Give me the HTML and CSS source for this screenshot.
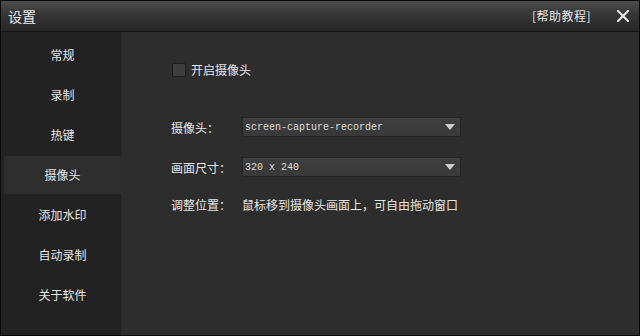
FILE: index.html
```html
<!DOCTYPE html>
<html lang="zh">
<head>
<meta charset="utf-8">
<link rel="stylesheet" href="styles.css">
</head>
<body>
<div class="window">
  <div class="titlebar">
    <span class="title">设置</span>
    <span class="help">[帮助教程]</span>
    <span class="close">
      <svg width="12" height="12" viewBox="0 0 12 12"><path d="M1 1 L11 11 M11 1 L1 11" stroke="#e6e6e6" stroke-width="2.2" stroke-linecap="square"/></svg>
    </span>
  </div>
  <div class="body">
    <div class="sidebar">
      <div class="item">常规</div>
      <div class="item">录制</div>
      <div class="item">热键</div>
      <div class="item active">摄像头</div>
      <div class="item">添加水印</div>
      <div class="item">自动录制</div>
      <div class="item">关于软件</div>
    </div>
    <div class="main">
      <div class="check-row">
        <span class="checkbox"></span>
        <span class="check-label">开启摄像头</span>
      </div>
      <div class="row first">
        <span class="label">摄像头：</span>
        <div class="select"><span class="select-text">screen-capture-recorder</span><span class="arrow"></span></div>
      </div>
      <div class="row">
        <span class="label">画面尺寸：</span>
        <div class="select"><span class="select-text">320 x 240</span><span class="arrow"></span></div>
      </div>
      <div class="row text-row">
        <span class="label">调整位置：</span>
        <span class="value">鼠标移到摄像头画面上，可自由拖动窗口</span>
      </div>
    </div>
  </div>
</div>
</body>
</html>
```
FILE: styles.css
```css
* { box-sizing: border-box; }
html, body { margin: 0; padding: 0; background: #000; }
body {
  width: 640px;
  height: 336px;
  font-family: "Noto Sans CJK SC", "Noto Sans", sans-serif;
  color: #e6e6e6;
}
.window {
  width: 640px;
  height: 336px;
  border: 1px solid #0a0a0a;
  display: flex;
  flex-direction: column;
  background: #2d2d2d;
}
.titlebar {
  height: 31px;
  flex: none;
  display: flex;
  align-items: center;
  padding: 0 10px 0 7px;
  background: linear-gradient(to bottom, #4c4c4c 0%, #363636 45%, #262626 100%);
  border-bottom: 1px solid #161616;
}
.title {
  font-size: 14px;
  color: #ececec;
  flex: 1;
  line-height: 16px;
}
.help {
  font-size: 12px;
  color: #e6e6e6;
  letter-spacing: 0.5px;
  margin-right: 26px;
  line-height: 16px;
}
.close {
  width: 12px;
  height: 12px;
  display: flex;
}
.body {
  flex: 1;
  display: flex;
  min-height: 0;
}
.sidebar {
  width: 120px;
  flex: none;
  background: #222222;
  padding: 4px 0 0 3px;
  display: flex;
  flex-direction: column;
  gap: 2px;
}
.item {
  height: 38px;
  display: flex;
  align-items: center;
  justify-content: center;
  font-size: 12px;
  line-height: 14px;
  color: #e6e6e6;
  padding-bottom: 1px;
}
.item.active {
  background: #2e2e2e;
}
.main {
  flex: 1;
  padding: 31px 0 0 50px;
  display: flex;
  flex-direction: column;
}
.check-row {
  display: flex;
  align-items: center;
  height: 14px;
  margin-left: 1px;
}
.checkbox {
  width: 14px;
  height: 14px;
  background: #3e3e3e;
  border: 1px solid #1e1e1e;
  border-radius: 2px;
  margin-right: 5px;
}
.check-label {
  font-size: 12px;
  color: #e6e6e6;
  line-height: 14px;
}
.row {
  display: flex;
  align-items: center;
  height: 20px;
  margin-top: 20px;
}
.row.first { margin-top: 40px; }
.label {
  width: 71px;
  font-size: 12px;
  color: #e6e6e6;
}
.select {
  width: 219px;
  height: 20px;
  background: linear-gradient(to bottom, #3e3e3e, #393939);
  border: 1px solid #262626;
  display: flex;
  align-items: center;
  padding: 0 5px 0 2px;
}
.select-text {
  flex: 1;
  font-family: "Liberation Mono", "DejaVu Sans Mono", monospace;
  font-size: 10px;
  color: #dcdcdc;
}
.arrow {
  width: 0;
  height: 0;
  border-left: 5px solid transparent;
  border-right: 5px solid transparent;
  border-top: 6px solid #cfcfcf;
}
.text-row { height: 16px; margin-top: 19px; }
.value {
  font-size: 12px;
  color: #e6e6e6;
}
```
